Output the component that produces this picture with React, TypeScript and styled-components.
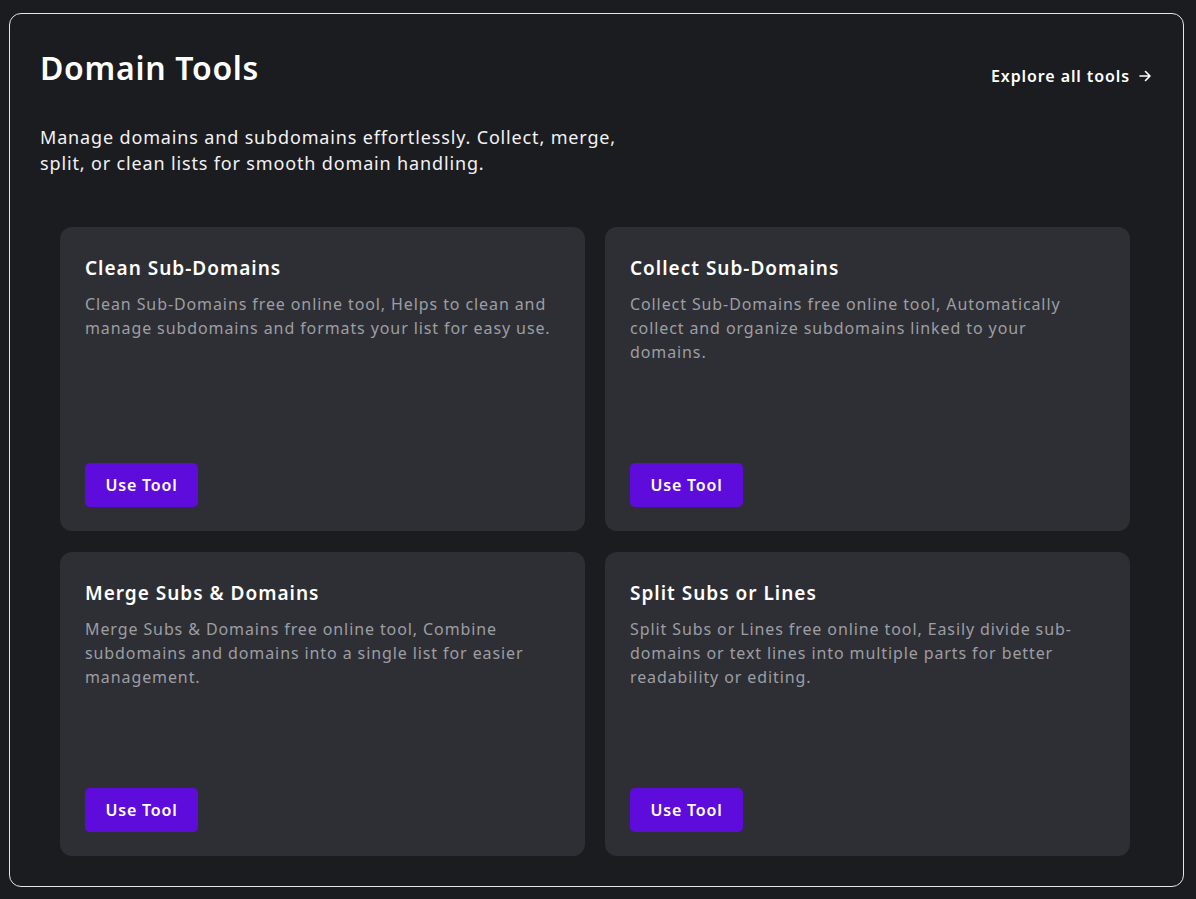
import styled, { createGlobalStyle } from "styled-components"

const GlobalStyle = createGlobalStyle`
  html, body {
    margin: 0;
    background: #1b1c20;
  }
  body {
    font-family: "Noto Sans", "Lato", sans-serif;
    color: #ffffff;
  }
`

const Page = styled.div`
  padding: 13px 12px 13px 9px;
`

const Section = styled.section`
  border: 1px solid #e6e6e8;
  border-radius: 12px;
  padding: 30px 30px 30px 30px;
  background: #1b1c20;
`

const Header = styled.div`
  display: flex;
  justify-content: space-between;
  align-items: flex-start;
`

const Title = styled.h2`
  margin: 4px 0 0;
  font-size: 32px;
  line-height: 40px;
  font-weight: 600;
  letter-spacing: 0.7px;
`

const ExploreLink = styled.a`
  display: flex;
  align-items: center;
  gap: 8px;
  margin-top: 21px;
  margin-right: 1px;
  font-size: 16px;
  font-weight: 600;
  letter-spacing: 0.9px;
  color: #ffffff;
  text-decoration: none;
  cursor: pointer;
`

const Intro = styled.p`
  margin: 36px 0 0;
  max-width: 590px;
  font-size: 18px;
  line-height: 26px;
  letter-spacing: 0.85px;
  color: #f2f2f4;
`

const Grid = styled.div`
  display: grid;
  grid-template-columns: 1fr 1fr;
  gap: 21px 20px;
  margin: 51px 23px 0 20px;
`

const Card = styled.div`
  display: flex;
  flex-direction: column;
  height: 304px;
  box-sizing: border-box;
  padding: 29px 25px 24px;
  border-radius: 12px;
  background: #2e2f34;
`

const CardTitle = styled.h3`
  margin: 0;
  font-size: 19px;
  line-height: 24px;
  font-weight: 600;
  letter-spacing: 1px;
`

const CardText = styled.p`
  margin: 12px 0 0;
  font-size: 16px;
  line-height: 24px;
  letter-spacing: 0.9px;
  color: #9d9ea3;
`

const UseButton = styled.button`
  margin-top: auto;
  align-self: flex-start;
  width: 113px;
  height: 44px;
  border: none;
  border-radius: 5px;
  background: #5d0cdc;
  color: #ffffff;
  font-family: inherit;
  font-size: 16px;
  font-weight: 600;
  letter-spacing: 0.8px;
  cursor: pointer;
`

const ArrowIcon = () => (
  <svg width="14" height="14" viewBox="0 0 14 14" fill="none" stroke="currentColor" strokeWidth="1.6" strokeLinecap="round" strokeLinejoin="round">
    <path d="M2 7h10M7.5 2.5 12 7l-4.5 4.5" />
  </svg>
)

const tools = [
  {
    name: "Clean Sub-Domains",
    text: "Clean Sub-Domains free online tool, Helps to clean and manage subdomains and formats your list for easy use.",
  },
  {
    name: "Collect Sub-Domains",
    text: "Collect Sub-Domains free online tool, Automatically collect and organize subdomains linked to your domains.",
  },
  {
    name: "Merge Subs & Domains",
    text: "Merge Subs & Domains free online tool, Combine subdomains and domains into a single list for easier management.",
  },
  {
    name: "Split Subs or Lines",
    text: "Split Subs or Lines free online tool, Easily divide sub-domains or text lines into multiple parts for better readability or editing.",
  },
]

export default function App() {
  return (
    <>
      <GlobalStyle />
      <Page>
        <Section>
          <Header>
            <Title>Domain Tools</Title>
            <ExploreLink>
              Explore all tools
              <ArrowIcon />
            </ExploreLink>
          </Header>
          <Intro>
            Manage domains and subdomains effortlessly. Collect, merge, split, or clean lists for smooth domain handling.
          </Intro>
          <Grid>
            {tools.map((tool) => (
              <Card key={tool.name}>
                <CardTitle>{tool.name}</CardTitle>
                <CardText>{tool.text}</CardText>
                <UseButton>Use Tool</UseButton>
              </Card>
            ))}
          </Grid>
        </Section>
      </Page>
    </>
  )
}
